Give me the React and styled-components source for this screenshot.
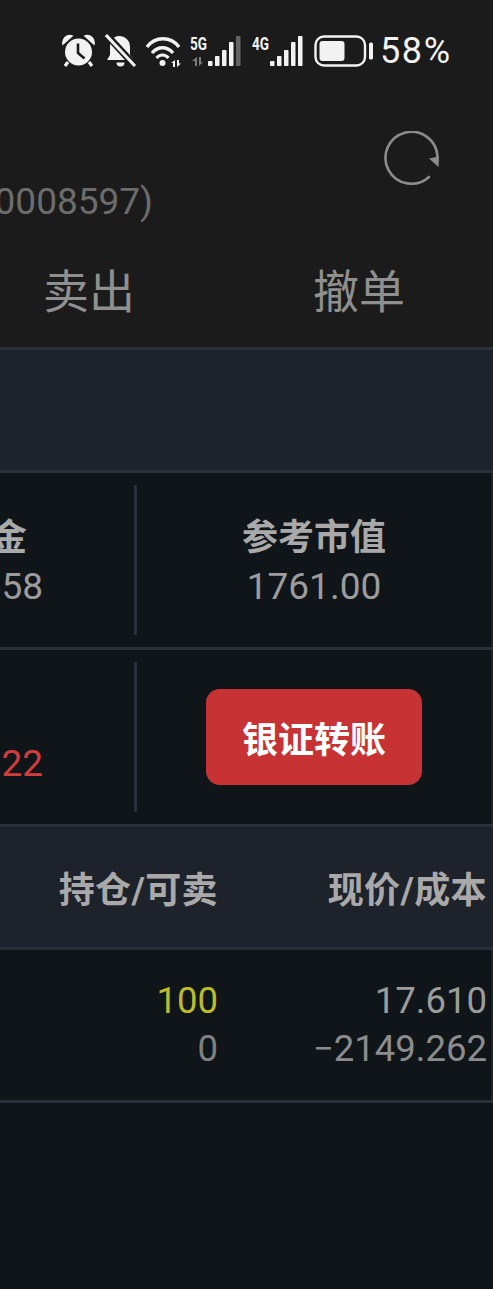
import React from "react";
import styled, { createGlobalStyle } from "styled-components";

const GlobalStyle = createGlobalStyle`
  html, body {
    margin: 0;
    padding: 0;
    background: #1b1b1b;
  }
  body {
    font-family: Roboto, "Noto Sans CJK SC", sans-serif;
  }
`;

const Page = styled.div`
  width: 493px;
  height: 1289px;
  overflow: hidden;
  background: #10151a;
  display: flex;
  flex-direction: column;
`;

const Head = styled.header`
  height: 347px;
  background: #1b1b1b;
  display: flex;
  flex-direction: column;
  flex: none;
`;

const StatusBar = styled.div`
  height: 34px;
  padding: 34px 0 0 62px;
  display: flex;
  align-items: center;
  color: #f2f2f2;
`;

const StatusIcon = styled.svg`
  display: block;
  flex: none;
  margin-left: ${(p) => p.$gap || 0}px;
`;

const Percent = styled.span`
  font-size: 36px;
  letter-spacing: 1.6px;
  margin-left: 6px;
  line-height: 34px;
  white-space: nowrap;
`;

const RefreshRow = styled.div`
  height: 112px;
  padding: 63px 53px 0 0;
  box-sizing: border-box;
  display: flex;
  justify-content: flex-end;
`;

const AccountRow = styled.div`
  height: 44px;
  display: flex;
  justify-content: flex-end;
  padding-right: 340px;
  white-space: nowrap;
  font-size: 37px;
  font-weight: 400;
  line-height: 44px;
  color: #6c6c6c;
`;

const Tabs = styled.div`
  display: grid;
  grid-template-columns: 270px 270px;
  justify-content: end;
  margin-right: -1px;
  margin-top: 38px;
`;

const Tab = styled.div`
  text-align: center;
  font-size: 46px;
  line-height: 60px;
  font-weight: 400;
  color: #8f8f8f;
`;

const Panel = styled.main`
  border-right: 2px solid #1e222b;
  display: flex;
  flex-direction: column;
  flex: none;
`;

const Divider = styled.div`
  height: 3px;
  margin-right: -2px;
  background: #2a2f3a;
  flex: none;
`;

const Band = styled.div`
  height: 120px;
  background: #1e222b;
  flex: none;
`;

const Stats = styled.div`
  height: 174px;
  display: grid;
  grid-template-columns: 358px 3px 354px;
  justify-content: end;
  align-items: center;
  flex: none;
`;

const StatCell = styled.div`
  text-align: center;
  white-space: nowrap;
  padding-top: 2px;
`;

const StatRule = styled.div`
  width: 3px;
  height: 150px;
  background: #2a2f3a;
`;

const StatLabel = styled.div`
  font-size: 36px;
  line-height: 44px;
  font-weight: 700;
  color: #a9a9a9;
`;

const StatValue = styled.div`
  font-size: 37px;
  line-height: 40px;
  margin-top: 7px;
  font-weight: 400;
  color: ${(p) => p.$color || "#9c9c9c"};
`;

const TransferButton = styled.button`
  display: block;
  margin: -2px auto 0;
  width: 216px;
  height: 96px;
  border: 0;
  border-radius: 14px;
  background: #c73335;
  color: #fff;
  font-family: inherit;
  font-size: 36px;
  font-weight: 700;
  padding: 0;
`;

const TableHead = styled.div`
  height: 120px;
  flex: none;
  background: #1e222b;
  display: grid;
  grid-template-columns: 218px 269px;
  padding-right: 4px;
  justify-content: end;
  align-items: center;
`;

const HeadCell = styled.div`
  text-align: right;
  font-size: 36px;
  letter-spacing: 0.4px;
  font-weight: 700;
  color: #a9a9a9;
  white-space: nowrap;
`;

const TableRow = styled.div`
  height: 150px;
  flex: none;
  display: grid;
  grid-template-columns: 218px 269px;
  padding-right: 4px;
  justify-content: end;
  align-items: center;
`;

const NumberCol = styled.div`
  text-align: right;
  white-space: nowrap;
`;

const NumberLine = styled.div`
  font-size: 36.500px;
  font-weight: 400;
  line-height: 48px;
  color: ${(p) => p.$color || "#9c9c9c"};
`;

const AlarmIcon = () => (
  <StatusIcon width="34" height="34" viewBox="0 0 34 34" fill="none">
    <circle cx="16.500" cy="18" r="13.500" fill="currentColor" />
    <path d="M1 10C0 5 5 0 10 2ZM32 10C33 5 28 0 23 2Z" fill="currentColor" stroke="currentColor" strokeWidth="1.500" />
    <path d="M16 9.500v9.500l6.500 5.500" stroke="#1b1b1b" strokeWidth="2.600" />
    <path d="M6 28l-3 4M27 28l3 4" stroke="currentColor" strokeWidth="3.200" />
  </StatusIcon>
);

const MutedBellIcon = () => (
  <StatusIcon $gap={9} width="32" height="34" viewBox="0 0 32 34" fill="none">
    <path d="M14 2c6 0 11 4 11 11v8l4 5H2l3-5v-8c0-6 3-11 9-11z" fill="currentColor" />
    <path d="M11.500 28.500h8a4 4 0 0 1-8 0z" fill="currentColor" />
    <path d="M-2 -3l34 37" stroke="#1b1b1b" strokeWidth="7" />
    <path d="M1 1l29 31" stroke="currentColor" strokeWidth="3" />
  </StatusIcon>
);

const WifiIcon = () => (
  <StatusIcon $gap={8} width="38" height="32" viewBox="0 0 38 32" fill="none">
    <path d="M2 12C10 1 26 1 34 12" stroke="currentColor" strokeWidth="3.400" />
    <path d="M7 18c6-7 15-7 21 0" stroke="currentColor" strokeWidth="3.400" />
    <path d="M11.500 23c3.500-4 8.500-4 12 0" stroke="currentColor" strokeWidth="3.200" />
    <circle cx="17.500" cy="28" r="3" fill="currentColor" />
    <path d="M30 25v7h-2v-4h-2zM32 25v7l4-3.500h-2v-3.500z" fill="currentColor" />
  </StatusIcon>
);

const signalBars = [
  { x: 18, h: 5 },
  { x: 25, h: 10 },
  { x: 32, h: 16 },
  { x: 39, h: 24 },
  { x: 46, h: 30 },
];

const SignalIcon = ({ label, dimLast, arrows, $gap }) => (
  <StatusIcon $gap={$gap} width="51" height="32" viewBox="0 0 51 32">
    <text
      x="0"
      y="15"
      fontSize="18"
      fontWeight="700"
      fontFamily="Roboto, sans-serif"
      fill="currentColor"
      textLength="17"
      lengthAdjust="spacingAndGlyphs"
    >
      {label}
    </text>
    {arrows && (
      <path d="M7 22v9H5v-5H2zM9 22v9l4-4h-2v-5z" fill="currentColor" opacity="0.45" />
    )}
    {signalBars.map((bar, i) => (
      <rect
        key={bar.x}
        x={bar.x}
        y={31 - bar.h}
        width="4.500"
        height={bar.h}
        rx="0.800"
        fill="currentColor"
        opacity={dimLast && i === 4 ? 0.35 : 1}
      />
    ))}
  </StatusIcon>
);

const BatteryIcon = () => (
  <StatusIcon $gap={11} width="60" height="32" viewBox="0 0 60 32" fill="none">
    <rect x="1.500" y="1.500" width="49.500" height="29" rx="8.500" stroke="currentColor" strokeWidth="2.400" />
    <rect x="5.500" y="6" width="25" height="20" rx="3" fill="currentColor" />
    <rect x="55" y="7.500" width="4" height="17" rx="1.500" fill="currentColor" />
  </StatusIcon>
);

const RefreshIcon = () => (
  <svg width="56" height="56" viewBox="0 0 56 56" fill="none">
    <path d="M45 46A26 26 0 1 1 53.500 26" stroke="#8c8c8c" strokeWidth="2.600" strokeLinecap="round" />
    <path d="M45 27.500L55 25.500L54.500 36Z" fill="#8c8c8c" />
  </svg>
);

export default function App() {
  return (
    <Page>
      <GlobalStyle />
      <Head>
        <StatusBar>
          <AlarmIcon />
          <MutedBellIcon />
          <WifiIcon />
          <SignalIcon label="5G" dimLast arrows $gap={7} />
          <SignalIcon label="4G" $gap={11} />
          <BatteryIcon />
          <Percent>58%</Percent>
        </StatusBar>
        <RefreshRow>
          <RefreshIcon />
        </RefreshRow>
        <AccountRow>(0008597)</AccountRow>
        <Tabs>
          <Tab>卖出</Tab>
          <Tab>撤单</Tab>
        </Tabs>
      </Head>
      <Panel>
        <Divider />
        <Band />
        <Divider />
        <Stats>
          <StatCell>
            <StatLabel>可用资金</StatLabel>
            <StatValue>100000.58</StatValue>
          </StatCell>
          <StatRule />
          <StatCell>
            <StatLabel>参考市值</StatLabel>
            <StatValue>1761.00</StatValue>
          </StatCell>
        </Stats>
        <Divider />
        <Stats>
          <StatCell>
            <StatLabel>盈亏</StatLabel>
            <StatValue $color="#d23c3c">100000.22</StatValue>
          </StatCell>
          <StatRule />
          <StatCell>
            <TransferButton>银证转账</TransferButton>
          </StatCell>
        </Stats>
        <Divider />
        <TableHead>
          <HeadCell>持仓/可卖</HeadCell>
          <HeadCell>现价/成本</HeadCell>
        </TableHead>
        <Divider />
        <TableRow>
          <NumberCol>
            <NumberLine $color="#bcbc2a">100</NumberLine>
            <NumberLine $color="#808080">0</NumberLine>
          </NumberCol>
          <NumberCol>
            <NumberLine>17.610</NumberLine>
            <NumberLine $color="#8c8c8c">−2149.262</NumberLine>
          </NumberCol>
        </TableRow>
        <Divider />
      </Panel>
    </Page>
  );
}
